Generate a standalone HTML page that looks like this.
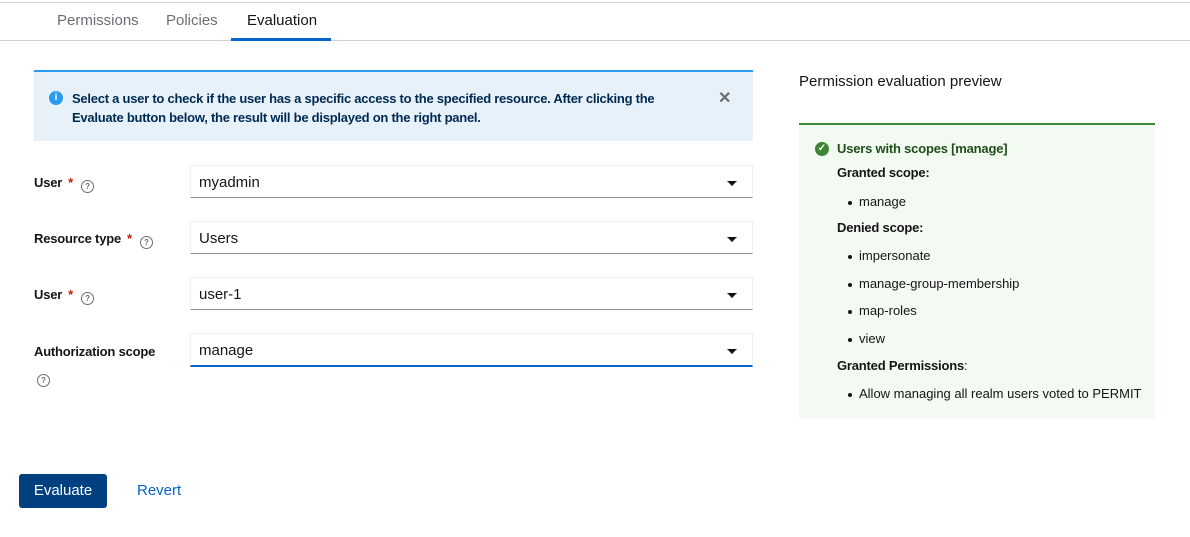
<!DOCTYPE html>
<html><head><style>
body{margin:0;width:1190px;height:537px;background:#fff;font-family:"Liberation Sans",sans-serif;color:#151515;position:relative;overflow:hidden}
.a{position:absolute}
.tab{position:absolute;top:12px;font-size:15px;color:#6a6e73}
.lbl{position:absolute;left:34px;font-size:13px;font-weight:bold;letter-spacing:-0.2px}
.req{color:#c9190b;margin-left:6px}
.q{display:inline-block;width:11px;height:11px;border:1.4px solid #6a6e73;border-radius:50%;font-size:8px;line-height:11px;text-align:center;color:#6a6e73;font-weight:bold;margin-left:8px;vertical-align:-2px}
.sel{position:absolute;left:190px;width:563px;height:33px;border:1px solid #f0f0f0;border-bottom:1px solid #8a8d90;font-size:15px;line-height:34px;padding-left:8px;box-sizing:border-box}
.sel:after{content:"";position:absolute;right:15px;top:15px;border-left:5px solid transparent;border-right:5px solid transparent;border-top:5px solid #151515}
.li{position:absolute;left:859px;font-size:13px;color:#151515}
.li:before{content:"";position:absolute;left:-11px;top:7px;width:4px;height:4px;border-radius:50%;background:#151515}
.h{position:absolute;left:837px;font-size:13px;font-weight:bold;letter-spacing:-0.2px}
</style></head><body>
<div class="a" style="left:0;top:2px;width:1190px;height:1px;background:#d2d2d2"></div>
<div class="tab" style="left:57px">Permissions</div>
<div class="tab" style="left:166px">Policies</div>
<div class="tab" style="left:247px;color:#151515">Evaluation</div>
<div class="a" style="left:0;top:40px;width:1190px;height:1px;background:#d2d2d2"></div>
<div class="a" style="left:231px;top:38px;width:100px;height:3px;background:#0066cc"></div>

<div class="a" style="left:34px;top:70px;width:719px;height:71px;background:#e7f1fa;border-top:2px solid #2b9af3;box-sizing:border-box"></div>
<div class="a" style="left:49px;top:91px;width:14px;height:14px;border-radius:50%;background:#2b9af3;color:#fff;font-size:10px;font-weight:bold;text-align:center;line-height:14px">i</div>
<div class="a" style="left:72px;top:89px;width:620px;font-size:13px;font-weight:bold;color:#002952;line-height:19px;letter-spacing:-0.25px">Select a user to check if the user has a specific access to the specified resource. After clicking the<br>Evaluate button below, the result will be displayed on the right panel.</div>
<div class="a" style="left:718px;top:88px;font-size:16px;font-weight:bold;color:#6a6e73">✕</div>

<div class="lbl" style="top:175px">User<span class="req">*</span><span class="q">?</span></div>
<div class="sel" style="top:165px">myadmin</div>
<div class="lbl" style="top:231px">Resource type<span class="req">*</span><span class="q">?</span></div>
<div class="sel" style="top:221px">Users</div>
<div class="lbl" style="top:287px">User<span class="req">*</span><span class="q">?</span></div>
<div class="sel" style="top:277px">user-1</div>
<div class="lbl" style="top:344px">Authorization scope</div>
<div class="a" style="left:29px;top:368px"><span class="q">?</span></div>
<div class="sel" style="top:333px;height:34px;border-bottom:2px solid #0066cc">manage</div>

<div class="a" style="left:799px;top:73px;font-size:15px">Permission evaluation preview</div>
<div class="a" style="left:799px;top:123px;width:356px;height:295px;background:#f3faf2;border-top:2px solid #3e8635;box-sizing:border-box"></div>
<div class="a" style="left:815px;top:142px;width:14px;height:14px;border-radius:50%;background:#3e8635;color:#fff;font-size:10px;text-align:center;line-height:14px;font-weight:bold">✓</div>
<div class="a" style="left:837px;top:141px;font-size:13px;font-weight:bold;color:#1e4f18;letter-spacing:-0.2px">Users with scopes [manage]</div>
<div class="h" style="top:165px">Granted scope:</div>
<div class="li" style="top:194px">manage</div>
<div class="h" style="top:220px">Denied scope:</div>
<div class="li" style="top:248px">impersonate</div>
<div class="li" style="top:276px">manage-group-membership</div>
<div class="li" style="top:303px">map-roles</div>
<div class="li" style="top:331px">view</div>
<div class="h" style="top:358px">Granted Permissions<span style="font-weight:normal">:</span></div>
<div class="li" style="top:386px">Allow managing all realm users voted to PERMIT</div>

<div class="a" style="left:19px;top:474px;width:88px;height:34px;background:#004080;border-radius:3px;color:#fff;font-size:15px;line-height:34px;text-align:center">Evaluate</div>
<div class="a" style="left:137px;top:482px;font-size:15px;color:#0066cc">Revert</div>
</body></html>
